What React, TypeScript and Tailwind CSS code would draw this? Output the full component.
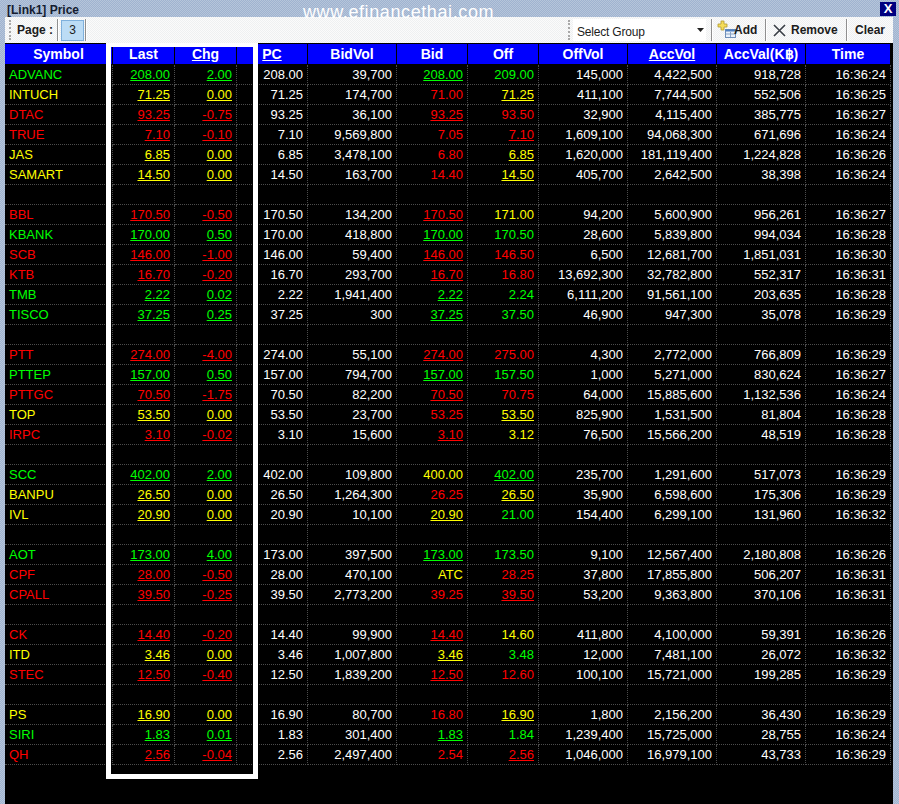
import { Fragment } from 'react'

type Row = [string, string, string, string, string, string, string, string, string, string, string]

const rows: (Row | null)[] = [
  ['ADVANC', '208.00', '2.00', '208.00', '39,700', '208.00', '209.00', '145,000', '4,422,500', '918,728', '16:36:24'],
  ['INTUCH', '71.25', '0.00', '71.25', '174,700', '71.00', '71.25', '411,100', '7,744,500', '552,506', '16:36:25'],
  ['DTAC', '93.25', '-0.75', '93.25', '36,100', '93.25', '93.50', '32,900', '4,115,400', '385,775', '16:36:27'],
  ['TRUE', '7.10', '-0.10', '7.10', '9,569,800', '7.05', '7.10', '1,609,100', '94,068,300', '671,696', '16:36:24'],
  ['JAS', '6.85', '0.00', '6.85', '3,478,100', '6.80', '6.85', '1,620,000', '181,119,400', '1,224,828', '16:36:26'],
  ['SAMART', '14.50', '0.00', '14.50', '163,700', '14.40', '14.50', '405,700', '2,642,500', '38,398', '16:36:24'],
  null,
  ['BBL', '170.50', '-0.50', '170.50', '134,200', '170.50', '171.00', '94,200', '5,600,900', '956,261', '16:36:27'],
  ['KBANK', '170.00', '0.50', '170.00', '418,800', '170.00', '170.50', '28,600', '5,839,800', '994,034', '16:36:28'],
  ['SCB', '146.00', '-1.00', '146.00', '59,400', '146.00', '146.50', '6,500', '12,681,700', '1,851,031', '16:36:30'],
  ['KTB', '16.70', '-0.20', '16.70', '293,700', '16.70', '16.80', '13,692,300', '32,782,800', '552,317', '16:36:31'],
  ['TMB', '2.22', '0.02', '2.22', '1,941,400', '2.22', '2.24', '6,111,200', '91,561,100', '203,635', '16:36:28'],
  ['TISCO', '37.25', '0.25', '37.25', '300', '37.25', '37.50', '46,900', '947,300', '35,078', '16:36:29'],
  null,
  ['PTT', '274.00', '-4.00', '274.00', '55,100', '274.00', '275.00', '4,300', '2,772,000', '766,809', '16:36:29'],
  ['PTTEP', '157.00', '0.50', '157.00', '794,700', '157.00', '157.50', '1,000', '5,271,000', '830,624', '16:36:27'],
  ['PTTGC', '70.50', '-1.75', '70.50', '82,200', '70.50', '70.75', '64,000', '15,885,600', '1,132,536', '16:36:24'],
  ['TOP', '53.50', '0.00', '53.50', '23,700', '53.25', '53.50', '825,900', '1,531,500', '81,804', '16:36:28'],
  ['IRPC', '3.10', '-0.02', '3.10', '15,600', '3.10', '3.12', '76,500', '15,566,200', '48,519', '16:36:28'],
  null,
  ['SCC', '402.00', '2.00', '402.00', '109,800', '400.00', '402.00', '235,700', '1,291,600', '517,073', '16:36:29'],
  ['BANPU', '26.50', '0.00', '26.50', '1,264,300', '26.25', '26.50', '35,900', '6,598,600', '175,306', '16:36:29'],
  ['IVL', '20.90', '0.00', '20.90', '10,100', '20.90', '21.00', '154,400', '6,299,100', '131,960', '16:36:32'],
  null,
  ['AOT', '173.00', '4.00', '173.00', '397,500', '173.00', '173.50', '9,100', '12,567,400', '2,180,808', '16:36:26'],
  ['CPF', '28.00', '-0.50', '28.00', '470,100', 'ATC', '28.25', '37,800', '17,855,800', '506,207', '16:36:31'],
  ['CPALL', '39.50', '-0.25', '39.50', '2,773,200', '39.25', '39.50', '53,200', '9,363,800', '370,106', '16:36:31'],
  null,
  ['CK', '14.40', '-0.20', '14.40', '99,900', '14.40', '14.60', '411,800', '4,100,000', '59,391', '16:36:26'],
  ['ITD', '3.46', '0.00', '3.46', '1,007,800', '3.46', '3.48', '12,000', '7,481,100', '26,072', '16:36:32'],
  ['STEC', '12.50', '-0.40', '12.50', '1,839,200', '12.50', '12.60', '100,100', '15,721,000', '199,285', '16:36:29'],
  null,
  ['PS', '16.90', '0.00', '16.90', '80,700', '16.80', '16.90', '1,800', '2,156,200', '36,430', '16:36:29'],
  ['SIRI', '1.83', '0.01', '1.83', '301,400', '1.83', '1.84', '1,239,400', '15,725,000', '28,755', '16:36:24'],
  ['QH', '2.56', '-0.04', '2.56', '2,497,400', '2.54', '2.56', '1,046,000', '16,979,100', '43,733', '16:36:29'],
]

const headers: [string, boolean][] = [
  ['Symbol', false],
  ['Last', false],
  ['Chg', true],
  ['PC', true],
  ['BidVol', false],
  ['Bid', false],
  ['Off', false],
  ['OffVol', false],
  ['AccVol', true],
  ['AccVal(K฿)', false],
  ['Time', false],
]

const GREEN = 'text-[#00ff00]'
const RED = 'text-[#ff0000]'
const YELLOW = 'text-[#ffff00]'

function toneOf(value: number, base: number): string {
  if (value > base) return GREEN
  if (value < base) return RED
  return YELLOW
}

function Cell({ children, className = '' }: { children?: React.ReactNode; className?: string }) {
  return (
    <div className={`h-[20px] border-r border-b border-dotted border-[#4c4c4c] pr-[4px] text-right leading-[19px] whitespace-nowrap ${className}`}>
      {children}
    </div>
  )
}

function PriceCell({ value, last, base }: { value: string; last: string; base: number }) {
  if (value === 'ATC') return <Cell className={YELLOW}>ATC</Cell>
  const n = parseFloat(value)
  return <Cell className={`${toneOf(n, base)} ${value === last ? 'underline' : ''}`}>{value}</Cell>
}

function DataRow({ row }: { row: Row }) {
  const [symbol, last, chg, pc, bidVol, bid, off, offVol, accVol, accVal, time] = row
  const base = Math.round((parseFloat(last) - parseFloat(chg)) * 100) / 100
  const tone = toneOf(parseFloat(last), base)
  return (
    <>
      <Cell className={`!text-left pl-[4px] ${tone}`}>{symbol}</Cell>
      <Cell className={`underline ${tone}`}>{last}</Cell>
      <Cell className={`underline ${tone}`}>{chg}</Cell>
      <Cell className="text-white">{pc}</Cell>
      <Cell className="text-white">{bidVol}</Cell>
      <PriceCell value={bid} last={last} base={base} />
      <PriceCell value={off} last={last} base={base} />
      <Cell className="text-white">{offVol}</Cell>
      <Cell className="text-white">{accVol}</Cell>
      <Cell className="text-white">{accVal}</Cell>
      <Cell className="text-white">{time}</Cell>
    </>
  )
}

function Separator() {
  return <div className="h-[22px] w-[2px] border-l border-r border-l-[#8f8f8f] border-r-white" />
}

function Grip() {
  return <div className="h-[20px] w-[2px] border-l-2 border-dotted border-[#a8a8a8]" />
}

export default function App() {
  return (
    <div className="relative flex h-[804px] w-[899px] flex-col overflow-hidden bg-[repeating-conic-gradient(#9fb3d0_0_25%,#b6c5da_0_50%)] bg-size-[2px_2px] pl-[5px] pr-[6px] font-['Liberation_Sans',sans-serif]">
      {/* Title bar */}
      <div className="flex h-[17px] shrink-0 items-center pl-[2px] text-[12px] font-bold text-[#141c30]">
        <span className="pt-[2px]">[Link1] Price</span>
        <div className="ml-auto mr-[-3px] flex h-[14px] w-[16px] items-center justify-center bg-[#000080] text-[13px] leading-none font-bold text-white">
          X
        </div>
      </div>

      {/* Toolbar */}
      <div className="flex h-[26px] shrink-0 items-center bg-[repeating-conic-gradient(#fbfbfb_0_25%,#eef0f1_0_50%)] bg-size-[2px_2px] pl-[4px] text-[12px] font-bold text-[#1c1c1c]">
        <Grip />
        <span className="ml-[6px] w-[40px]">Page :</span>
        <Separator />
        <div className="ml-[2px] flex h-[21px] w-[23px] items-center justify-center border border-[#7fb0dc] bg-[#bcdcf5] font-normal">
          3
        </div>
        <div className="ml-[1px]">
          <Separator />
        </div>
        <div className="ml-auto">
          <Grip />
        </div>
        <div className="ml-[3px] flex h-[22px] w-[133px] items-center bg-white pl-[4px] font-normal">
          <span className="pt-[3px] text-[12px] tracking-[-0.2px]">Select Group</span>
          <svg className="ml-auto mr-[2px]" width="7" height="4" viewBox="0 0 7 4">
            <path d="M0 0h7L3.5 4z" fill="#222" />
          </svg>
        </div>
        <div className="ml-[5px]">
          <Separator />
        </div>
        <svg className="ml-[4px]" width="20" height="20" viewBox="0 0 20 20">
          <path d="M4 1h3v3h3v3H7v3H4V7H1V4h3z" fill="#f5dc5a" stroke="#b09a30" strokeWidth="0.8" />
          <rect x="8.5" y="9.5" width="10" height="8" fill="#eaf2fb" stroke="#6f8fb8" />
          <rect x="8.5" y="9.5" width="10" height="2" fill="#4f7fc0" />
          <path d="M9 14h9M13.5 12v5" stroke="#8aa4c6" strokeWidth="1" />
        </svg>
        <span className="ml-[-3px] w-[31px]">Add</span>
        <Separator />
        <svg className="ml-[5px]" width="15" height="15" viewBox="0 0 15 15">
          <path d="M2 2l11 11M13 2L2 13" stroke="#3a3f46" strokeWidth="1.6" fill="none" />
        </svg>
        <span className="ml-[4px] w-[55px]">Remove</span>
        <Separator />
        <span className="ml-[7px]">Clear</span>
        <span className="w-[8px]" />
      </div>

      {/* Price grid */}
      <div className="min-h-0 flex-1 bg-black pt-px text-[13px]">
        <div className="grid w-[886px] grid-cols-[108px_62px_62px_71px_89px_71px_71px_89px_89px_89px_85px]">
          {headers.map(([label, underlined]) => (
            <div
              key={label}
              className={`h-[21px] border-r border-b border-black bg-[#0000ff] text-center text-[14px] leading-[21px] font-bold whitespace-nowrap text-white ${underlined ? 'underline' : ''}`}
            >
              {label}
            </div>
          ))}
          {rows.map((row, i) => (
            <Fragment key={i}>
              {row ? (
                <DataRow row={row} />
              ) : (
                headers.map(([label]) => <Cell key={label} />)
              )}
            </Fragment>
          ))}
        </div>
      </div>

      {/* Watermark and highlight frame sit on top of the window */}
      <div className="pointer-events-none absolute left-[303px] top-[1px] text-[18px] leading-[22px] tracking-[0.6px] text-white">
        www.efinancethai.com
      </div>
      <div className="pointer-events-none absolute left-[106px] top-[43px] h-[736px] w-[152px] border-x-[5px] border-t-4 border-b-[5px] border-white" />
    </div>
  )
}
